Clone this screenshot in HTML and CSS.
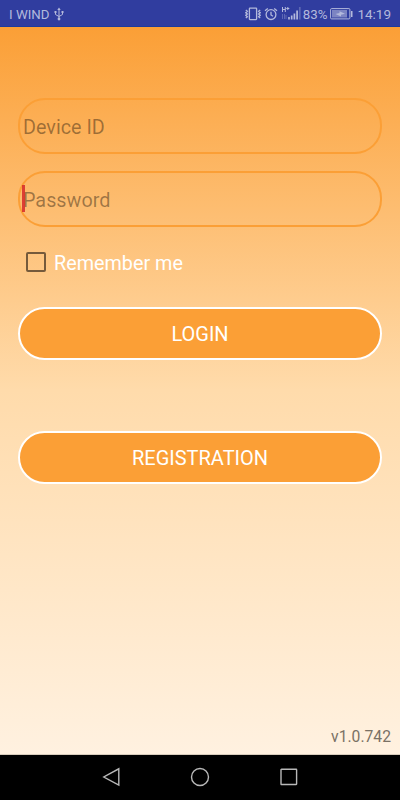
FILE: index.html
```html
<!DOCTYPE html>
<html lang="en">
  <head>
    <meta charset="UTF-8" />
    <meta name="viewport" content="width=device-width, initial-scale=1.0" />
    <title>Login</title>
    <link rel="stylesheet" href="styles.css">
  </head>
  <body>
    <header class="status-bar">
      <span class="carrier">I WIND</span>
      <svg class="usb" width="10" height="14" viewBox="0 0 10 14">
        <path d="M5 2V12M1.5 5V7.5L5 9.5M8.5 5V7.5L5 9.5" />
        <path class="fill" d="M3.3 3L5 .5L6.7 3ZM.5 4h2v2h-2zM7.5 4h2v2h-2z" />
        <circle class="fill" cx="5" cy="12" r="1.4" />
      </svg>
      <div class="status-right">
        <svg class="vibrate" width="16" height="14" viewBox="0 0 16 14">
          <rect x="4.4" y="1.2" width="7.2" height="11.4" rx=".5" />
          <path d="M.8 3L2.4 4.3L.8 5.7L2.4 7L.8 8.3L2.4 9.7L.8 11M15.2 3L13.6 4.3L15.2 5.7L13.6 7L15.2 8.3L13.6 9.7L15.2 11" />
        </svg>
        <svg class="alarm" width="14" height="14" viewBox="0 0 14 14">
          <circle cx="7" cy="7.6" r="4.9" />
          <path d="M7 4.8V8L9 9.2M1 3.7L3.8 1.4M13 3.7L10.2 1.4" />
        </svg>
        <svg class="signal" width="20" height="15" viewBox="0 0 20 15">
          <path d="M1.5 1V6M4.3 1V6M1.5 3.5H4.3M5.3 2.5H8.3M6.8 1V4" />
          <path class="dim" d="M1.5 8V13M3.5 8V13M5 9V13" />
          <path class="bars" d="M8 11V13.5M10.7 9.5V13.5M13.4 7.5V13.5M16.1 4.5V13.5" />
          <path class="bars dim" d="M18.8 1V13.5" />
        </svg>
        <span class="percent">83%</span>
        <svg class="battery" width="23" height="12" viewBox="0 0 23 12">
          <rect x=".6" y=".6" width="19.3" height="10.3" rx="1" />
          <path class="level" d="M2 2h15v7.5H2z" />
          <path class="fill" d="M5.5 6L9.5 5V3.3L15 5.7L11 6.7V8.4ZM21 3h1.5v6H21z" />
        </svg>
        <span class="clock">14:19</span>
      </div>
    </header>

    <main class="login">
      <input class="field" type="text" placeholder="Device ID" />
      <div class="password">
        <input class="field" type="password" placeholder="Password" />
        <span class="caret"></span>
      </div>
      <label class="remember">
        <input class="checkbox" type="checkbox" />
        <span>Remember me</span>
      </label>
      <button type="button" class="btn">LOGIN</button>
      <button type="button" class="btn btn-register">REGISTRATION</button>
      <p class="version">v1.0.742</p>
    </main>

    <nav class="nav-bar">
      <svg width="20" height="20" viewBox="0 0 20 20"><path d="M17.8 1.8V18L2.8 10Z" /></svg>
      <svg width="20" height="20" viewBox="0 0 20 20"><circle cx="10" cy="10" r="8.5" /></svg>
      <svg width="20" height="20" viewBox="0 0 20 20"><rect x="2" y="2.3" width="15.6" height="15.2" rx=".4" /></svg>
    </nav>
  </body>
</html>
```

FILE: styles.css
```css
* {
  box-sizing: border-box;
}
body {
  display: flex;
  flex-direction: column;
  height: 800px;
  margin: 0;
  font-family: Roboto, sans-serif;
}
svg {
  display: block;
  fill: none;
  stroke: currentColor;
}

/* status bar */
.status-bar {
  display: flex;
  align-items: center;
  height: 27px;
  padding: 1px 9px 0;
  background: #303d9f;
  border-bottom: 1px solid #1c3c9e;
  color: #b3b9dc;
  font-size: 13.5px;
}
.status-bar .fill {
  fill: currentColor;
  stroke: none;
}
.carrier {
  padding-top: 1px;
  font-size: 13.3px;
}
.usb {
  margin-left: 4px;
}
.status-right {
  display: flex;
  align-items: center;
  margin-left: auto;
}
.vibrate {
  stroke-width: 1.3;
}
.alarm {
  margin-left: 3px;
  stroke-width: 1.3;
}
.signal {
  margin-left: 3px;
}
.bars {
  stroke-width: 1.7;
}
.dim {
  opacity: 0.35;
}
.percent {
  margin-left: 2px;
  padding-top: 1px;
  font-size: 13.3px;
}
.battery {
  margin-left: 3px;
}
.level {
  fill: #7c84c2;
  stroke: none;
}
.clock {
  margin-left: 4px;
}

/* login form */
.login {
  display: flex;
  flex-direction: column;
  flex: 1;
  padding: 71px 18px 0;
  background: linear-gradient(#fb9f36, #ffdbab 50%, #fff1e0);
  border-bottom: 1px solid #d8ccbc;
}
.field {
  display: block;
  width: 100%;
  height: 56px;
  margin: 0;
  padding: 2px 3px 0;
  border: 2px solid #fb9f36;
  border-radius: 27px;
  background: transparent;
  font-family: inherit;
  font-size: 19.8px;
  outline: none;
}
.field::placeholder {
  color: rgba(0, 0, 0, 0.38);
  opacity: 1;
}
.password {
  position: relative;
  margin-top: 17px;
}
.caret {
  position: absolute;
  top: 14px;
  left: 4px;
  width: 3px;
  height: 27px;
  background: rgba(211, 32, 38, 0.8);
}
.remember {
  display: flex;
  align-items: center;
  height: 26px;
  margin-top: 23px;
  padding-left: 8px;
  color: #fff;
  font-size: 19.8px;
}
.checkbox {
  appearance: none;
  width: 20px;
  height: 20px;
  margin: 0 8px 2px 0;
  border: 2px solid #755a3b;
  border-radius: 2px;
}
.btn {
  height: 53px;
  margin: 31px 0 0;
  padding: 1px 0 0;
  border: 2px solid #fff;
  border-radius: 27px;
  background: #fb9f36;
  color: #fff;
  font-family: inherit;
  font-size: 20px;
}
.btn-register {
  margin-top: 71px;
}
.version {
  margin: auto -9px 8px 0;
  color: #7a7165;
  font-size: 15.7px;
  text-align: right;
}

/* system navigation */
.nav-bar {
  display: flex;
  align-items: center;
  justify-content: center;
  gap: 69px;
  height: 45px;
  padding-bottom: 1px;
  background: #000;
  color: #b8b8b8;
}
.nav-bar svg {
  stroke-width: 1.4;
}
```
